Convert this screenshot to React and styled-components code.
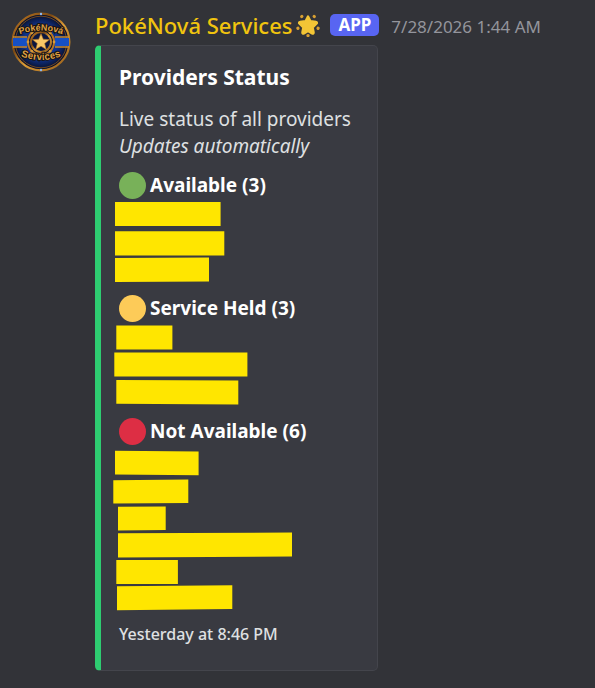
import React from "react";
import styled, { createGlobalStyle } from "styled-components";

const GlobalStyle = createGlobalStyle`
    * {
        box-sizing: border-box;
    }
    body {
        margin: 0;
        background-color: #323338;
        font-family: "Noto Sans", "Open Sans", sans-serif;
        color: #dfe0e2;
    }
`;

const Message = styled.article`
    display: flex;
    align-items: flex-start;
    gap: 24px;
    padding: 12px 11px 17px;
`;
const Avatar = styled.svg`
    flex: none;
    width: 60px;
    height: 60px;
`;
const Body = styled.div`
    flex: 1;
    min-width: 0;
`;
const Header = styled.header`
    display: flex;
    align-items: center;
    height: 26px;
    margin-bottom: 7px;
    white-space: nowrap;
`;
const Author = styled.h1`
    margin: 0;
    font-size: 22px;
    line-height: 26px;
    font-weight: 500;
    color: #f1c40f;
`;
const StarIcon = styled.svg`
    flex: none;
    width: 24px;
    height: 24px;
    margin-left: 4px;
`;
const AppTag = styled.span`
    margin: 0 12px 0 10px;
    padding: 0 8px;
    border-radius: 5px;
    background-color: #5865f2;
    font-size: 17px;
    line-height: 22px;
    font-weight: 700;
    color: #fff;
`;
const Sent = styled.time`
    padding-top: 3px;
    font-size: 17px;
    line-height: 26px;
    color: #94959c;
`;

const Embed = styled.section`
    max-width: 283px;
    padding: 17px 18px 24px;
    border: 1px solid #44454c;
    border-left: 6px solid #2ecc71;
    border-radius: 5px;
    background-color: #393a41;
`;
const Title = styled.h2`
    margin: 0 0 15px;
    font-size: 21px;
    line-height: 28px;
    font-weight: 700;
    color: #fff;
`;
const Description = styled.p`
    margin: 0 0 12px;
    font-size: 19px;
    line-height: 27px;
    white-space: nowrap;
`;
const Group = styled.section`
    margin-bottom: 15px;
`;
const GroupName = styled.h3`
    display: flex;
    align-items: center;
    gap: 4px;
    margin: 0;
    font-size: 19px;
    line-height: 27px;
    font-weight: 700;
    color: #fff;
    white-space: nowrap;
`;
const Dot = styled.span`
    width: 27px;
    height: 27px;
    border-radius: 50%;
    background-color: ${(props) => props.$color};
`;
const Marks = styled.svg`
    display: block;
    margin-left: -6px;
    fill: #ffe600;
`;
const Footer = styled.footer`
    font-size: 16px;
    line-height: 24px;
    font-weight: 500;
`;

// every mark is a hand-drawn four-sided block over one provider name
const groups = [
    {
        name: "Available",
        color: "#78b159",
        count: 3,
        marks: [
            "2,3 107.6,3 107.6,27 2,27",
            "2,32.3 111.3,32.3 111.3,56.4 2,56.4",
            "2,59 96,58.5 96,82.5 2,83",
        ],
    },
    {
        name: "Service Held",
        color: "#fdcb58",
        count: 3,
        marks: [
            "3.3,3.4 59.4,3.4 59.4,27.4 3.3,27.4",
            "1.3,30.5 134.4,30.5 134.4,54.5 1.3,54.5",
            "3.3,58 125.3,58.6 125.3,82.5 3.3,81.8",
        ],
    },
    {
        name: "Not Available",
        color: "#dd2e44",
        count: 6,
        marks: [
            "2,5.8 85.6,6.4 85.6,30.3 2,29.6",
            "0.3,35.2 75.3,34.6 75.3,58 0.3,58.6",
            "5,61.8 52.7,61.4 52.7,85 5,85.6",
            "5,88.3 179,87.5 179,111.4 5,112.6",
            "3.3,115 64.9,115 64.9,139 3.3,139",
            "4,141.2 119.3,140.2 119.3,164 4,165.2",
        ],
    },
];

const rays = [0, 1, 2, 3, 4];
const studs = [0, 1, 2, 3, 4, 5, 6, 7];

const Star = () => {
    return (
        <StarIcon viewBox="0 0 24 24" role="img" aria-label="glowing star">
            <path
                d="M12 3.6l2.400 4.600 5.600.8c.9.1 1.200.9.6 1.500l-4 4 1 5c.1.900-.7 1.400-1.400 1L12 18 7.800 20.500c-.7.4-1.500-.1-1.400-1l1-5-4-4c-.6-.6-.3-1.400.6-1.500l5.600-.8z"
                fill="#f3c536"
                stroke="#f3c536"
                strokeWidth="2.4"
                strokeLinejoin="round"
            />
            {rays.map((i) => (
                <ellipse
                    key={i}
                    cx="12"
                    cy="22.6"
                    rx="1.7"
                    ry="1.6"
                    transform={`rotate(${i * 72} 12 12)`}
                    fill="#d9a032"
                />
            ))}
        </StarIcon>
    );
};

const Logo = () => {
    return (
        <Avatar viewBox="0 0 60 60" role="img" aria-label="PokéNová Services">
            <defs>
                <radialGradient id="night">
                    <stop offset="0" stopColor="#0d2a78" />
                    <stop offset="0.6" stopColor="#10338c" />
                    <stop offset="1" stopColor="#080b1c" />
                </radialGradient>
                <linearGradient id="gold" x1="0" y1="0" x2="1" y2="1">
                    <stop offset="0" stopColor="#c07a22" />
                    <stop offset="0.35" stopColor="#7c4a14" />
                    <stop offset="0.55" stopColor="#dc9b35" />
                    <stop offset="1" stopColor="#8f5818" />
                </linearGradient>
                <path id="top" d="M4 24Q30 13 56 24" />
                <path id="bottom" d="M4 42Q30 54 56 42" />
            </defs>
            <circle cx="30" cy="30" r="28.4" fill="url(#night)" stroke="url(#gold)" strokeWidth="2.2" />
            <circle cx="30" cy="30" r="25.8" fill="none" stroke="#8a551d" strokeWidth="0.8" />
            <path d="M2 26h14v8H2zM44 26h14v8H44z" fill="#1750c4" />
            <path d="M2 25h14M2 35h14M44 25h14M44 35h14" stroke="#c98a30" strokeWidth="1.6" />
            <circle cx="30" cy="30" r="13" fill="#071030" stroke="#b87622" strokeWidth="2" />
            <circle cx="30" cy="30" r="10" fill="#0c1740" stroke="url(#gold)" strokeWidth="2" />
            {studs.map((i) => (
                <circle key={i} cx="30" cy="17" r="1.4" fill="#d99b3a" transform={`rotate(${i * 45} 30 30)`} />
            ))}
            <path
                d="M30 21.500l2.300 5.700 6.200.4-4.800 3.900 1.600 6-5.300-3.300-5.300 3.300 1.600-6-4.800-3.900 6.200-.4z"
                fill="#f8c766"
                stroke="#a8681c"
                strokeWidth="0.6"
            />
            <circle cx="30" cy="2" r="1.2" fill="#8bb8f5" />
            <circle cx="30" cy="58" r="1.2" fill="#8bb8f5" />
            <g
                fontFamily="Liberation Sans, sans-serif"
                fontWeight="700"
                fill="#dfa044"
                stroke="#1a1310"
                strokeWidth="2"
                paintOrder="stroke"
                textAnchor="middle"
            >
                <text fontSize="9">
                    <textPath href="#top" startOffset="50%">PokéNová</textPath>
                </text>
                <text fontSize="10">
                    <textPath href="#bottom" startOffset="50%">Services</textPath>
                </text>
            </g>
        </Avatar>
    );
};

const ProviderGroup = ({ name, color, count, marks }) => {
    return (
        <Group>
            <GroupName>
                <Dot $color={color} />
                {name} ({count})
            </GroupName>
            <Marks
                width="180"
                height={marks.length * 27}
                overflow="visible"
                role="img"
                aria-label={`${count} hidden providers`}
            >
                {marks.map((points) => (
                    <polygon key={points} points={points} />
                ))}
            </Marks>
        </Group>
    );
};

const App = () => {
    return (
        <>
            <GlobalStyle />
            <Message>
                <Logo />
                <Body>
                    <Header>
                        <Author>PokéNová Services</Author>
                        <Star />
                        <AppTag>APP</AppTag>
                        <Sent dateTime="2026-07-28T01:44">7/28/2026 1:44 AM</Sent>
                    </Header>
                    <Embed>
                        <Title>Providers Status</Title>
                        <Description>
                            Live status of all providers
                            <br />
                            <em>Updates automatically</em>
                        </Description>
                        {groups.map((group) => (
                            <ProviderGroup key={group.name} {...group} />
                        ))}
                        <Footer>Yesterday at 8:46 PM</Footer>
                    </Embed>
                </Body>
            </Message>
        </>
    );
};
export default App;
